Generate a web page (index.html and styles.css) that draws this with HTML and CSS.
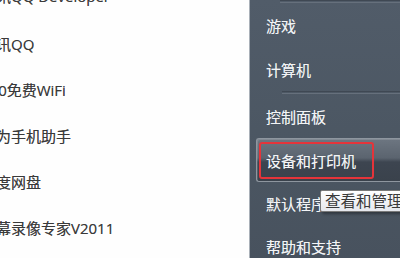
FILE: index.html
```html
<!DOCTYPE html>
<html lang="zh-CN">
<head>
<meta charset="utf-8">
<link rel="stylesheet" href="styles.css">
</head>
<body>
<div class="menu">
  <div class="programs">
    <div class="prog">腾讯QQ Developer</div>
    <div class="prog">腾讯QQ</div>
    <div class="prog">360免费WiFi</div>
    <div class="prog">华为手机助手</div>
    <div class="prog">百度网盘</div>
    <div class="prog">屏幕录像专家V2011</div>
  </div>
  <div class="places">
    <div class="sep sep-top"></div>
    <div class="place">游戏</div>
    <div class="place">计算机</div>
    <div class="sep"></div>
    <div class="place">控制面板</div>
    <div class="place hot">设备和打印机<span class="mark"></span></div>
    <div class="place short">默认程序</div>
    <div class="place short">帮助和支持</div>
  </div>
</div>
<div class="tip">查看和管理</div>
</body>
</html>
```
FILE: styles.css
```css
html, body {
  margin: 0;
  padding: 0;
}
body {
  width: 400px;
  height: 258px;
  overflow: hidden;
  position: relative;
  background: #fff;
  font-family: "Open Sans", "Noto Sans CJK SC", sans-serif;
  font-size: 15px;
}
.menu {
  display: flex;
  height: 258px;
}
.programs {
  width: 249px;
  flex: none;
  overflow: hidden;
  background: #fefefe;
  display: flex;
  flex-direction: column;
}
.prog {
  height: 46px;
  flex: none;
  line-height: 46px;
  margin-left: -19px;
  white-space: nowrap;
  color: #3a3a3a;
  text-shadow: 0 0 0.6px rgba(40,40,40,0.5);
}
.prog:first-child {
  margin-top: -25px;
  line-height: 42px;
}
.places {
  flex: 1;
  border-left: 1px solid #a9b0b8;
  background: linear-gradient(180deg, #515c69 0%, #4b5662 60%, #48525e 100%);
  display: flex;
  flex-direction: column;
  overflow: hidden;
}
.sep {
  height: 3px;
  flex: none;
  margin-left: 32px;
  box-sizing: border-box;
  border-top: 1px solid #3f4853;
  border-bottom: 1px solid #66707c;
}
.sep-top {
  margin-left: 30px;
}
.place {
  position: relative;
  height: 44px;
  flex: none;
  box-sizing: border-box;
  margin-left: 6px;
  padding-left: 9px;
  border: 1px solid transparent;
  border-right: none;
  display: flex;
  align-items: center;
  color: #f2f4f6;
  white-space: nowrap;
  text-shadow: 0 0 0.6px rgba(255,255,255,0.5);
}
.place.short {
  height: 43px;
}
.hot {
  border-color: #8e969f;
  border-radius: 3px 0 0 3px;
  background: linear-gradient(180deg, #6d7681 0%, #5b646f 45%, #3d4550 55%, #3a424c 100%);
  box-shadow: inset 1px 1px 0 rgba(255,255,255,0.15);
}
.mark {
  position: absolute;
  left: 2px;
  top: 3px;
  width: 115px;
  height: 37px;
  box-sizing: border-box;
  border: 2px solid #e5343a;
  border-radius: 3px;
}
.tip {
  position: absolute;
  left: 320px;
  top: 190px;
  width: 90px;
  height: 22px;
  box-sizing: border-box;
  padding-left: 4px;
  border: 1px solid #7a7a7a;
  border-radius: 2px;
  background: linear-gradient(180deg, #ffffff 0%, #e6e8ee 100%);
  box-shadow: 2px 2px 3px rgba(0,0,0,0.35);
  color: #3a3a3a;
  font-size: 15.5px;
  line-height: 20px;
  white-space: nowrap;
}
```
